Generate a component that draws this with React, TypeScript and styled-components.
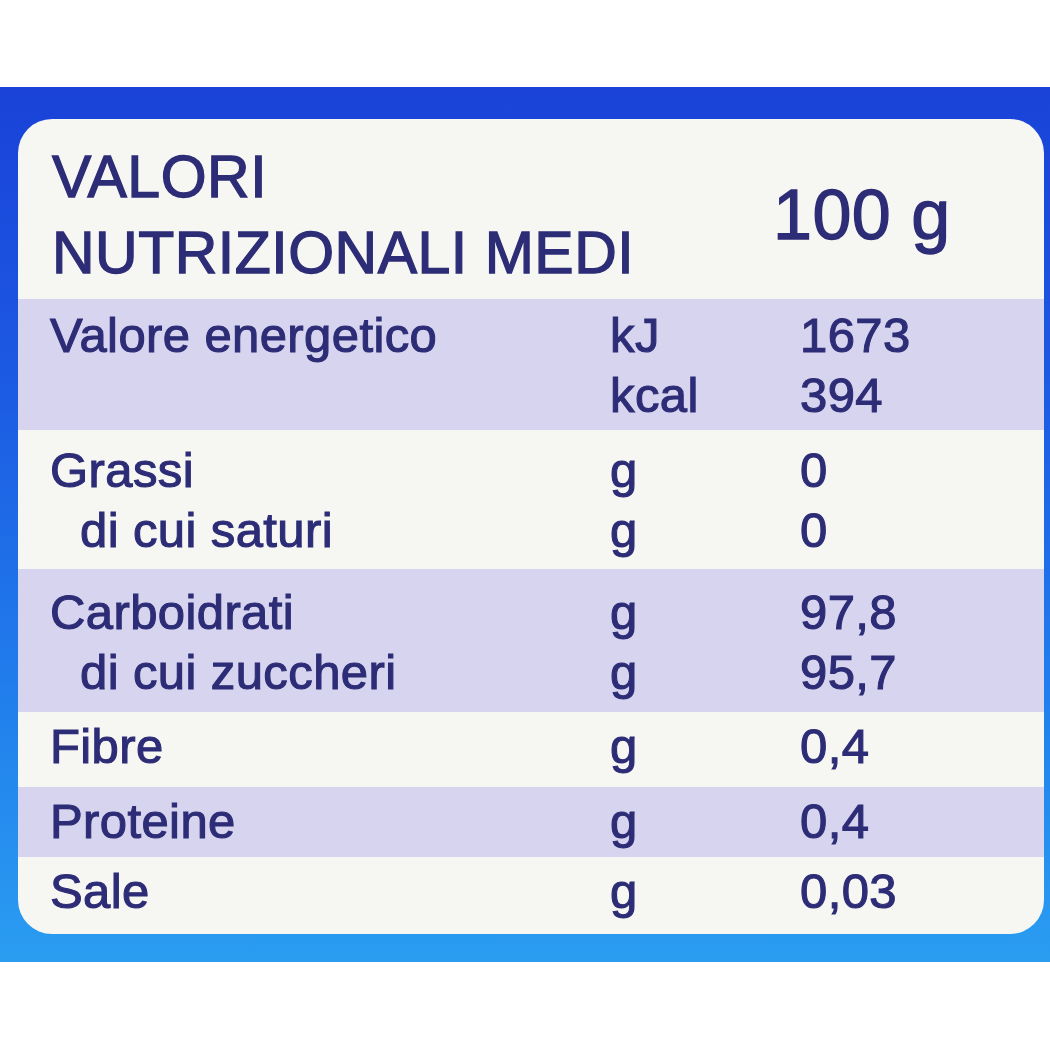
import React from "react";
import styled, { createGlobalStyle } from "styled-components";

interface INutrient {
    label: string;
    unit: string;
    value: string;
    sub?: boolean;
}

interface IRow {
    shaded: boolean;
    height: number;
    padTop: number;
    lines: INutrient[];
}

const rows: IRow[] = [
    {
        shaded: true,
        height: 131,
        padTop: 6,
        lines: [
            { label: "Valore energetico", unit: "kJ", value: "1673" },
            { label: "", unit: "kcal", value: "394" },
        ],
    },
    {
        shaded: false,
        height: 139,
        padTop: 10,
        lines: [
            { label: "Grassi", unit: "g", value: "0" },
            { label: "di cui saturi", unit: "g", value: "0", sub: true },
        ],
    },
    {
        shaded: true,
        height: 143,
        padTop: 13,
        lines: [
            { label: "Carboidrati", unit: "g", value: "97,8" },
            { label: "di cui zuccheri", unit: "g", value: "95,7", sub: true },
        ],
    },
    { shaded: false, height: 75, padTop: 4, lines: [{ label: "Fibre", unit: "g", value: "0,4" }] },
    { shaded: true, height: 70, padTop: 4, lines: [{ label: "Proteine", unit: "g", value: "0,4" }] },
    { shaded: false, height: 77, padTop: 4, lines: [{ label: "Sale", unit: "g", value: "0,03" }] },
];

const GlobalStyle = createGlobalStyle`
    html, body {
        margin: 0;
        padding: 0;
        background: #ffffff;
    }
    body {
        font-family: "Liberation Sans", Arial, sans-serif;
    }
`

const Page = styled.div`
    width: 1050px;
    height: 1050px;
    padding-top: 87px;
    box-sizing: border-box;
    background: #ffffff;
`

const Band = styled.div`
    height: 875px;
    box-sizing: border-box;
    padding: 32px 6px 28px 18px;
    background: linear-gradient(180deg, #1a42d8 0%, #1c5be3 35%, #217fec 70%, #2a9df1 100%);
`

const Panel = styled.div`
    height: 100%;
    background: #f6f6f3;
    border-radius: 34px;
    overflow: hidden;
    color: #2d2c76;
    -webkit-text-stroke: 1.1px #2d2c76;
`

const Header = styled.div`
    height: 180px;
    box-sizing: border-box;
    padding: 20px 0 0 34px;
    display: grid;
    grid-template-columns: 721px auto;
    align-items: start;
`

const Title = styled.div`
    font-size: 59px;
    line-height: 76px;
    letter-spacing: 0.5px;
    -webkit-text-stroke: 1.3px #2d2c76;
`

const Amount = styled.div`
    font-size: 70px;
    line-height: 70px;
    margin-top: 41px;
    letter-spacing: 0.5px;
    -webkit-text-stroke: 1.3px #2d2c76;
`

const Row = styled.div<{ $shaded: boolean; $height: number; $padTop: number }>`
    height: ${(p) => p.$height}px;
    box-sizing: border-box;
    padding: ${(p) => p.$padTop}px 0 0 32px;
    background: ${(p) => (p.$shaded ? "#d7d4ef" : "transparent")};
`

const Line = styled.div`
    display: grid;
    grid-template-columns: 560px 190px auto;
    font-size: 49px;
    line-height: 60px;
    letter-spacing: 0.4px;
    white-space: nowrap;
`

const Label = styled.span<{ $sub?: boolean }>`
    padding-left: ${(p) => (p.$sub ? "30px" : "0")};
`

export default function App() {
    return (
        <Page>
            <GlobalStyle />
            <Band>
                <Panel>
                    <Header>
                        <Title>
                            VALORI
                            <br />
                            NUTRIZIONALI MEDI
                        </Title>
                        <Amount>100 g</Amount>
                    </Header>
                    {rows.map((row, i) => (
                        <Row key={i} $shaded={row.shaded} $height={row.height} $padTop={row.padTop}>
                            {row.lines.map((line, j) => (
                                <Line key={j}>
                                    <Label $sub={line.sub}>{line.label}</Label>
                                    <span>{line.unit}</span>
                                    <span>{line.value}</span>
                                </Line>
                            ))}
                        </Row>
                    ))}
                </Panel>
            </Band>
        </Page>
    );
}
